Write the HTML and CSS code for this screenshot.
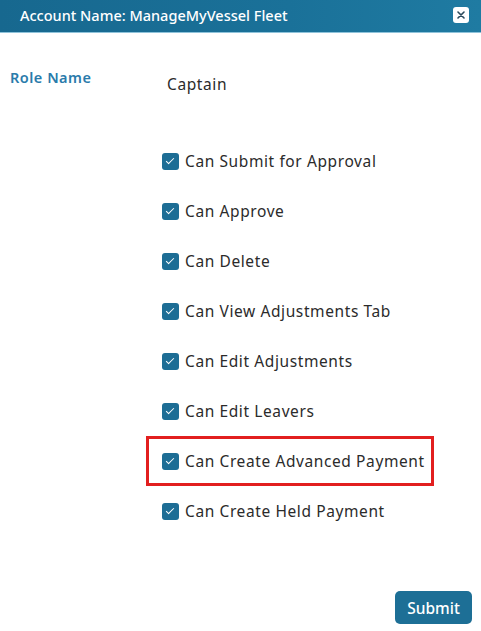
FILE: index.html
```html
<!DOCTYPE html>
<html lang="en">
<head>
    <meta charset="UTF-8">
    <meta name="viewport" content="width=device-width, initial-scale=1.0">
    <title>Role Permissions</title>
    <link rel="stylesheet" href="styles.css">
</head>
<body>
    <div class="modal">
        <div class="modal-header">
            <span class="modal-title">Account Name: ManageMyVessel Fleet</span>
            <button class="close-btn" type="button" aria-label="Close">
                <svg width="8" height="8" viewBox="0 0 8 8"><path d="M1 1L7 7M7 1L1 7" stroke="#2b4a5c" stroke-width="1.6" stroke-linecap="round"/></svg>
            </button>
        </div>
        <div class="modal-body">
            <div class="role-row">
                <div class="role-label">Role Name</div>
                <div class="role-value">Captain</div>
            </div>
            <ul class="perm-list">
                <li class="perm"><span class="check"></span>Can Submit for Approval</li>
                <li class="perm"><span class="check"></span>Can Approve</li>
                <li class="perm"><span class="check"></span>Can Delete</li>
                <li class="perm"><span class="check"></span>Can View Adjustments Tab</li>
                <li class="perm"><span class="check"></span>Can Edit Adjustments</li>
                <li class="perm"><span class="check"></span>Can Edit Leavers</li>
                <li class="perm highlight"><span class="check"></span>Can Create Advanced Payment</li>
                <li class="perm"><span class="check"></span>Can Create Held Payment</li>
            </ul>
            <div class="actions">
                <button class="submit-btn" type="button">Submit</button>
            </div>
        </div>
    </div>
</body>
</html>
```

FILE: styles.css
```css
* {
    margin: 0;
    padding: 0;
    box-sizing: border-box;
}

body {
    font-family: 'Noto Sans', sans-serif;
    background-color: #ffffff;
    color: #2b2b2b;
    width: 481px;
    height: 631px;
    overflow: hidden;
}

.modal {
    display: flex;
    flex-direction: column;
    height: 631px;
}

.modal-header {
    height: 33px;
    background: linear-gradient(90deg, #17688f 0%, #1a7199 60%, #1f7ba2 100%);
    border-bottom: 1px solid #8fc3da;
    display: flex;
    align-items: center;
    justify-content: space-between;
    padding: 0 12px 2px 20px;
}

.modal-title {
    color: #ffffff;
    font-size: 14.5px;
    font-weight: 500;
}

.close-btn {
    width: 16px;
    height: 16px;
    border: none;
    border-radius: 3px;
    background-color: #ffffff;
    display: flex;
    align-items: center;
    justify-content: center;
    cursor: pointer;
}

.modal-body {
    flex: 1;
    display: flex;
    flex-direction: column;
}

.role-row {
    display: flex;
    padding: 34px 0 0 10px;
    height: 103px;
}

.role-label {
    width: 157px;
    color: #2a7bab;
    font-size: 14.5px;
    font-weight: 600;
    letter-spacing: 0.5px;
}

.role-value {
    font-size: 15.5px;
    letter-spacing: 0.6px;
    padding-top: 6px;
}

.perm-list {
    list-style: none;
    padding-left: 146px;
}

.perm {
    display: flex;
    align-items: center;
    height: 50px;
    width: 288px;
    padding-left: 16px;
    font-size: 15.5px;
    letter-spacing: 0.6px;
    color: #2b2b2b;
}

.highlight {
    border: 3px solid #e21f1f;
    padding-left: 13px;
}

.check {
    width: 17px;
    height: 17px;
    border-radius: 3px;
    background-color: #1d6d95;
    margin-right: 6px;
    position: relative;
    flex-shrink: 0;
}

.check::after {
    content: '';
    position: absolute;
    left: 6px;
    top: 3px;
    width: 3px;
    height: 7px;
    border-right: 1.5px solid #ffffff;
    border-bottom: 1.5px solid #ffffff;
    transform: rotate(45deg);
}

.actions {
    margin-top: auto;
    display: flex;
    justify-content: flex-end;
    padding: 0 9px 7px 0;
}

.submit-btn {
    width: 77px;
    height: 33px;
    border: none;
    border-radius: 5px;
    background-color: #1d6f96;
    color: #ffffff;
    font-family: 'Noto Sans', sans-serif;
    font-size: 15.5px;
    font-weight: 500;
    cursor: pointer;
}
```
